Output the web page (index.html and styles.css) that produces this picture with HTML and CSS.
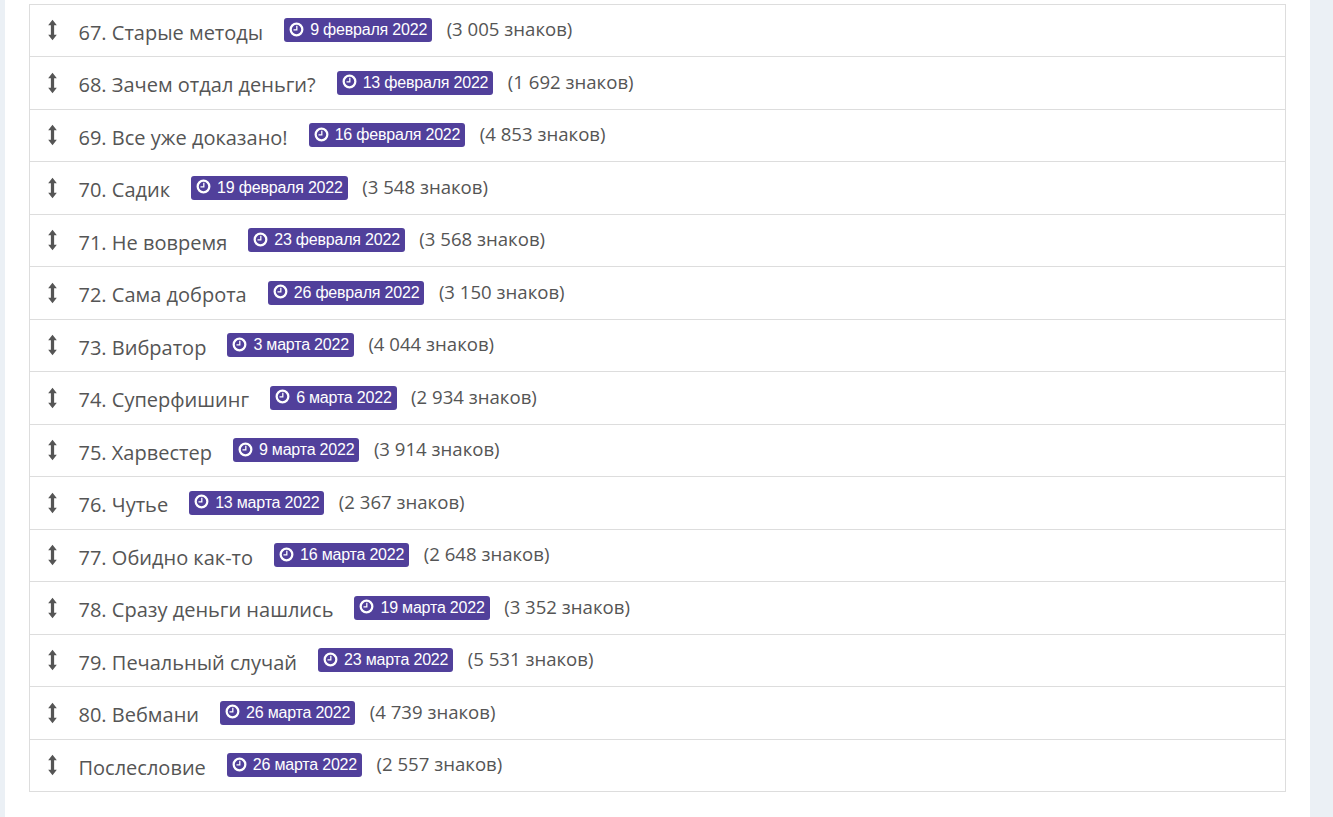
FILE: index.html
```html
<!DOCTYPE html>
<html lang="ru">
<head>
  <meta charset="UTF-8" />
  <meta name="viewport" content="width=device-width, initial-scale=1.0"/>
  <title>Оглавление</title>
  <link rel="stylesheet" href="styles.css">
</head>
<body>
<svg class="sprite" width="0" height="0">
  <symbol id="arrows" viewBox="0 0 10 24">
    <path d="M5 0.5 9.8 6.8H6.8V17.2H9.8L5 23.5 0.2 17.2H3.2V6.8H0.2Z"/>
  </symbol>
  <symbol id="clock" viewBox="0 0 14 14">
    <path fill-rule="evenodd" d="M7 0.5a6.5 6.5 0 1 1 0 13a6.5 6.5 0 0 1 0-13ZM7 2.6a4.4 4.4 0 1 0 0 8.8a4.4 4.4 0 0 0 0-8.8ZM7.9 3.6V7.9H4.2V6.7H6.7V3.6Z"/>
  </symbol>
</svg>
<main class="page">
  <ul class="chapters">
    <li class="chapter"><svg class="move"><use href="#arrows"/></svg><span class="name">67. Старые методы</span><span class="date"><svg class="clock"><use href="#clock"/></svg>9 февраля 2022</span><span class="size">(3 005 знаков)</span></li>
    <li class="chapter"><svg class="move"><use href="#arrows"/></svg><span class="name">68. Зачем отдал деньги?</span><span class="date"><svg class="clock"><use href="#clock"/></svg>13 февраля 2022</span><span class="size">(1 692 знаков)</span></li>
    <li class="chapter"><svg class="move"><use href="#arrows"/></svg><span class="name">69. Все уже доказано!</span><span class="date"><svg class="clock"><use href="#clock"/></svg>16 февраля 2022</span><span class="size">(4 853 знаков)</span></li>
    <li class="chapter"><svg class="move"><use href="#arrows"/></svg><span class="name">70. Садик</span><span class="date"><svg class="clock"><use href="#clock"/></svg>19 февраля 2022</span><span class="size">(3 548 знаков)</span></li>
    <li class="chapter"><svg class="move"><use href="#arrows"/></svg><span class="name">71. Не вовремя</span><span class="date"><svg class="clock"><use href="#clock"/></svg>23 февраля 2022</span><span class="size">(3 568 знаков)</span></li>
    <li class="chapter"><svg class="move"><use href="#arrows"/></svg><span class="name">72. Сама доброта</span><span class="date"><svg class="clock"><use href="#clock"/></svg>26 февраля 2022</span><span class="size">(3 150 знаков)</span></li>
    <li class="chapter"><svg class="move"><use href="#arrows"/></svg><span class="name">73. Вибратор</span><span class="date"><svg class="clock"><use href="#clock"/></svg>3 марта 2022</span><span class="size">(4 044 знаков)</span></li>
    <li class="chapter"><svg class="move"><use href="#arrows"/></svg><span class="name">74. Суперфишинг</span><span class="date"><svg class="clock"><use href="#clock"/></svg>6 марта 2022</span><span class="size">(2 934 знаков)</span></li>
    <li class="chapter"><svg class="move"><use href="#arrows"/></svg><span class="name">75. Харвестер</span><span class="date"><svg class="clock"><use href="#clock"/></svg>9 марта 2022</span><span class="size">(3 914 знаков)</span></li>
    <li class="chapter"><svg class="move"><use href="#arrows"/></svg><span class="name">76. Чутье</span><span class="date"><svg class="clock"><use href="#clock"/></svg>13 марта 2022</span><span class="size">(2 367 знаков)</span></li>
    <li class="chapter"><svg class="move"><use href="#arrows"/></svg><span class="name">77. Обидно как-то</span><span class="date"><svg class="clock"><use href="#clock"/></svg>16 марта 2022</span><span class="size">(2 648 знаков)</span></li>
    <li class="chapter"><svg class="move"><use href="#arrows"/></svg><span class="name">78. Сразу деньги нашлись</span><span class="date"><svg class="clock"><use href="#clock"/></svg>19 марта 2022</span><span class="size">(3 352 знаков)</span></li>
    <li class="chapter"><svg class="move"><use href="#arrows"/></svg><span class="name">79. Печальный случай</span><span class="date"><svg class="clock"><use href="#clock"/></svg>23 марта 2022</span><span class="size">(5 531 знаков)</span></li>
    <li class="chapter"><svg class="move"><use href="#arrows"/></svg><span class="name">80. Вебмани</span><span class="date"><svg class="clock"><use href="#clock"/></svg>26 марта 2022</span><span class="size">(4 739 знаков)</span></li>
    <li class="chapter"><svg class="move"><use href="#arrows"/></svg><span class="name">Послесловие</span><span class="date"><svg class="clock"><use href="#clock"/></svg>26 марта 2022</span><span class="size">(2 557 знаков)</span></li>
  </ul>
</main>
</body>
</html>
```

FILE: styles.css
```css
html, body {
  margin: 0;
  padding: 0;
  height: 100%;
  overflow: hidden;
}
body {
  background-color: #ebf0f5;
  font-family: 'Open Sans', sans-serif;
  color: #555;
}
.sprite {
  display: block;
}
.page {
  margin-left: 5px;
  width: 1305px;
  height: 817px;
  padding: 3.5px 24px 0;
  box-sizing: border-box;
  background: #fff;
}
.chapters {
  list-style: none;
  margin: 0;
  padding: 0;
  border-top: 1px solid #ddd;
  border-left: 1px solid #ddd;
  border-right: 1px solid #ddd;
  width: 1257px;
  box-sizing: border-box;
}
.chapter {
  display: flex;
  align-items: center;
  height: 52.5px;
  box-sizing: border-box;
  border-bottom: 1px solid #ddd;
  padding-left: 18px;
}
.move {
  width: 9px;
  height: 22px;
  fill: #555;
  flex: none;
}
.name {
  margin-left: 21.5px;
  margin-right: 21px;
  padding-top: 4px;
  font-size: 20px;
}
.date {
  display: flex;
  align-items: center;
  height: 24px;
  padding: 0 5px;
  border-radius: 3px;
  background: #51409b;
  color: #fff;
  font-family: 'Liberation Sans', sans-serif;
  font-size: 16px;
  letter-spacing: -0.2px;
}
.clock {
  width: 15px;
  height: 15px;
  margin-right: 6px;
  fill: #fff;
  flex: none;
  margin-top: -2px;
}
.size {
  margin-left: 14.5px;
  margin-top: -3px;
  font-size: 18.6px;
}
```
